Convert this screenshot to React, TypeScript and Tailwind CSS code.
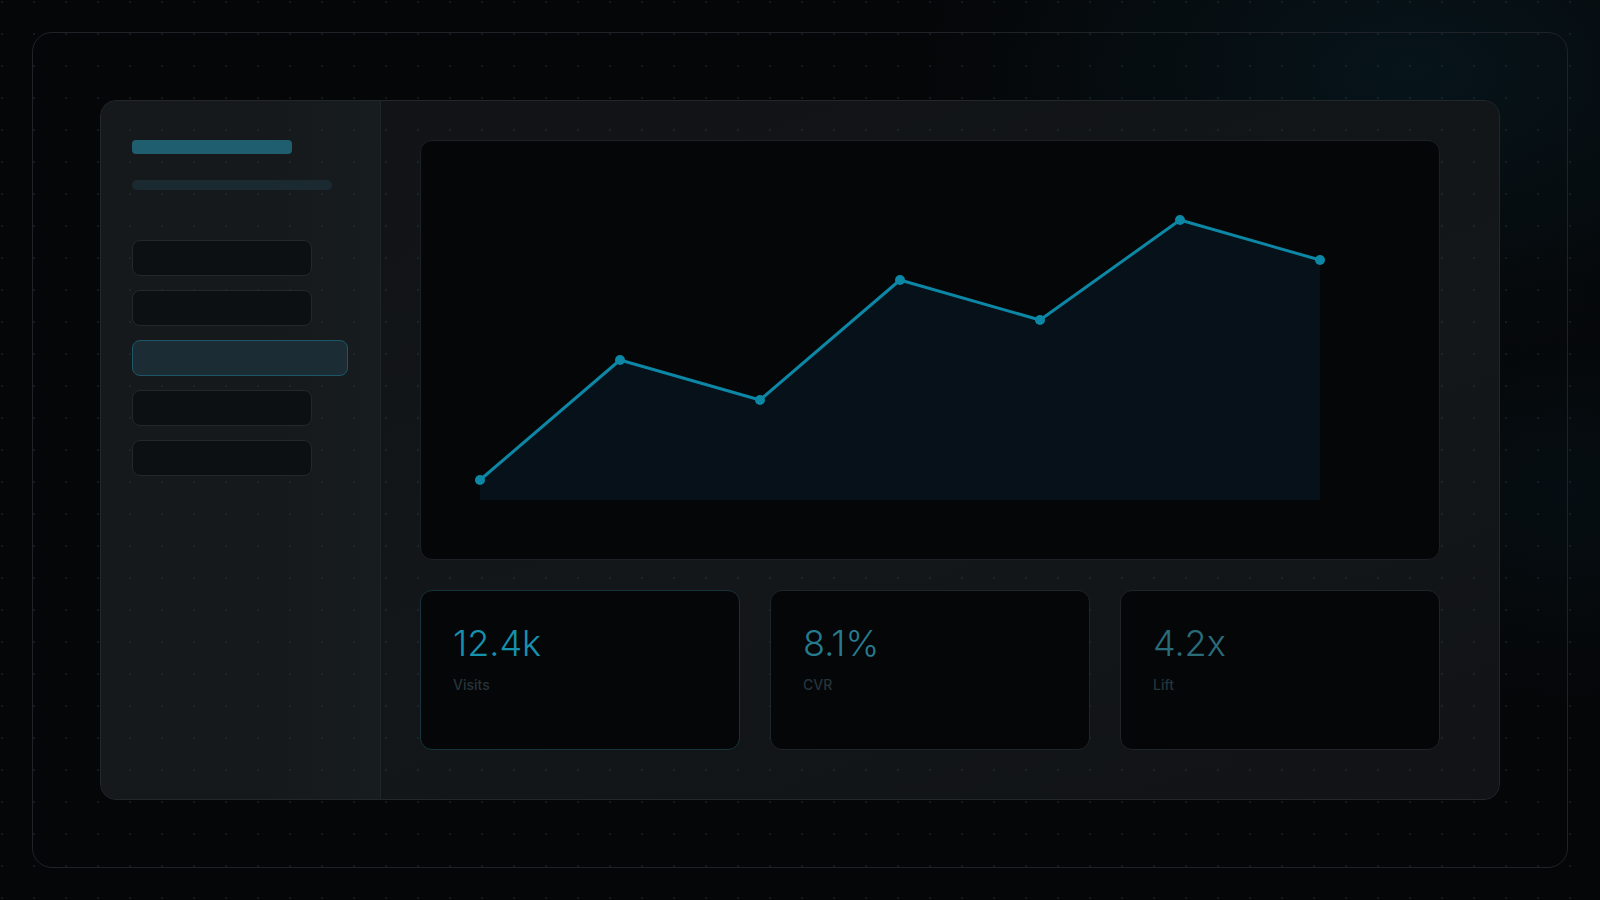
import React from "react";

type Stat = {
  value: string;
  label: string;
  valueColor: string;
  border: string;
};

const stats: Stat[] = [
  { value: "12.4k", label: "Visits", valueColor: "text-[#1591ae]", border: "border-[#17343d]" },
  { value: "8.1%", label: "CVR", valueColor: "text-[#267b8e]", border: "border-[#1e2428]" },
  { value: "4.2x", label: "Lift", valueColor: "text-[#2a6b7a]", border: "border-[#1e2428]" },
];

// chart points, in px inside the chart card
const points: [number, number][] = [
  [59, 339],
  [199, 219],
  [339, 259],
  [479, 139],
  [619, 179],
  [759, 79],
  [899, 119],
];
const baseline = 359;

function Chart() {
  const line = points.map(([x, y]) => `${x},${y}`).join(" ");
  const area = `M${points[0][0]},${baseline} L${line.split(" ").join(" L")} L${points[points.length - 1][0]},${baseline} Z`;
  return (
    <svg width="1018" height="418" viewBox="0 0 1018 418" className="block">
      <path d={area} fill="#06111a" />
      <polyline points={line} fill="none" stroke="#0c87a5" strokeWidth="3" strokeLinejoin="round" />
      {points.map(([x, y]) => (
        <circle key={x} cx={x} cy={y} r="5" fill="#0c87a5" />
      ))}
    </svg>
  );
}

function NavItem({ active }: { active?: boolean }) {
  return (
    <div
      className={
        active
          ? "h-9 w-[216px] rounded-lg border border-[#1d5767] bg-[#1b2c34]"
          : "h-9 w-[180px] rounded-lg border border-[#22282c] bg-[#0d1013]"
      }
    />
  );
}

export default function App() {
  return (
    <div className="h-[900px] w-[1600px] overflow-hidden bg-[#050608] p-8 font-['Inter',sans-serif]">
      <div className="relative h-full w-full">
        {/* background glow + dot grid */}
        <div className="pointer-events-none absolute -inset-8 bg-[radial-gradient(ellipse_700px_420px_at_88%_8%,rgba(12,70,90,0.22),transparent_70%),radial-gradient(ellipse_400px_300px_at_98%_55%,rgba(10,60,80,0.14),transparent_70%)]" />
        <div className="pointer-events-none absolute -inset-8 bg-[radial-gradient(circle,rgba(40,70,80,0.35)_1px,transparent_1.5px)] bg-[size:32px_32px] bg-[position:-14px_-14px]" />

        <div className="relative h-full w-full rounded-[20px] border border-[#1f2327] p-[67px]">
          <div className="flex h-full w-full overflow-hidden rounded-2xl border border-[#22272b] bg-[#121518]">
            {/* sidebar */}
            <aside className="flex w-[280px] shrink-0 flex-col border-r border-[#1f2428] bg-[radial-gradient(circle,rgba(45,75,85,0.28)_1px,transparent_1.5px),linear-gradient(90deg,#15191c_0%,#15191c_60%,#171c1f_100%)] bg-[size:32px_32px,100%_100%] bg-[position:13px_13px,0_0] pl-[31px] pt-[39px]">
              <div className="h-[14px] w-[160px] rounded-[4px] bg-[#1f5e6e]" />
              <div className="mt-[26px] h-[10px] w-[200px] rounded-full bg-[#1b2a31]" />
              <div className="mt-[50px] flex flex-col gap-[14px]">
                <NavItem />
                <NavItem />
                <NavItem active />
                <NavItem />
                <NavItem />
              </div>
            </aside>

            {/* main */}
            <main className="flex flex-1 flex-col gap-[30px] bg-[radial-gradient(circle,rgba(45,75,85,0.28)_1px,transparent_1.5px),linear-gradient(160deg,#111316_0%,#131719_55%,#111316_100%)] bg-[size:32px_32px,100%_100%] bg-[position:-11px_13px,0_0] pl-[39px] pr-[59px] pt-[39px]">
              <div className="h-[420px] w-[1020px] overflow-hidden rounded-xl border border-[#1b2126] bg-[#050608]">
                <Chart />
              </div>

              <div className="flex gap-[30px]">
                {stats.map((s) => (
                  <div
                    key={s.label}
                    className={`h-40 w-[320px] rounded-xl border bg-[#050608] p-8 ${s.border}`}
                  >
                    <div className={`text-[36px] font-light leading-10 ${s.valueColor}`}>
                      {s.value}
                    </div>
                    <div className="mt-3 text-sm font-medium leading-5 text-[#25343a]">{s.label}</div>
                  </div>
                ))}
              </div>
            </main>
          </div>
        </div>
      </div>
    </div>
  );
}
